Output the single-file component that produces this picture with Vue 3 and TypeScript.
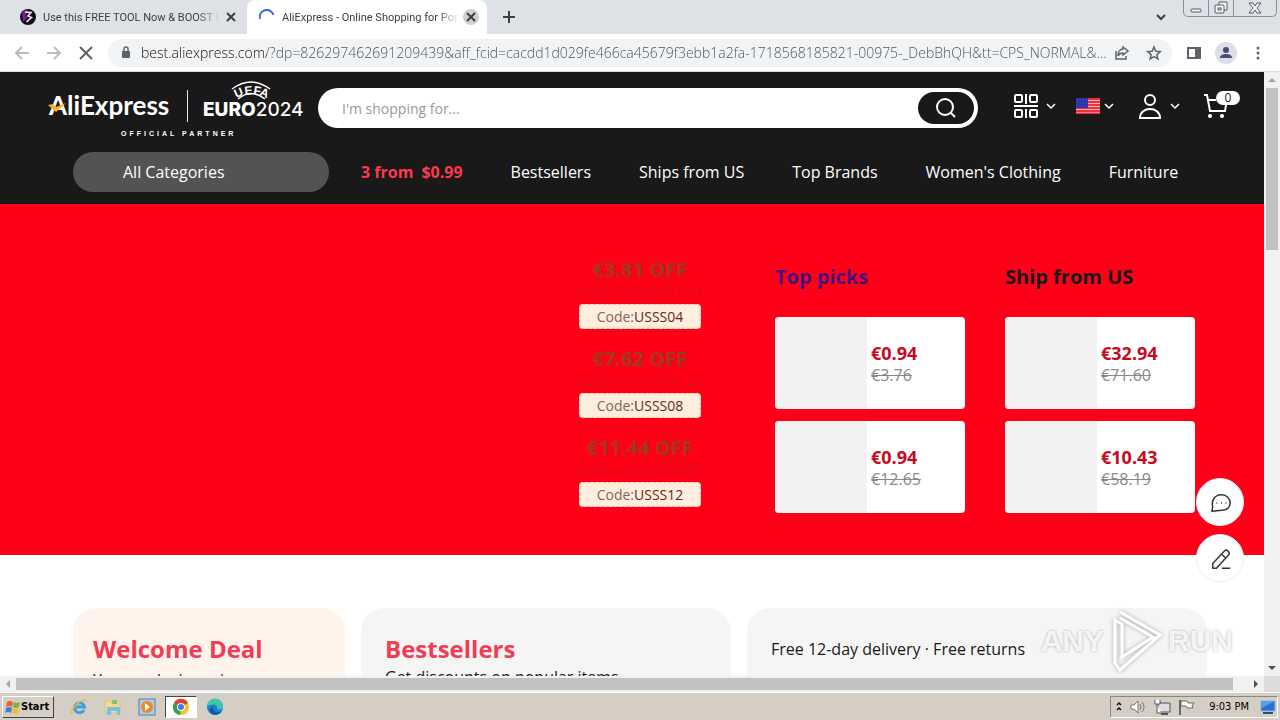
<script setup lang="ts">
import { ref } from 'vue'

interface Coupon { amount: string; terms: string; code: string }
interface Pick { price: string; was: string }
interface PickColumn { title: string; visited: boolean; items: Pick[] }

const address = ref('best.aliexpress.com/?dp=826297462691209439&aff_fcid=cacdd1d029fe466ca45679f3ebb1a2fa-1718568185821-00975-_DebBhQH&tt=CPS_NORMAL&...')
const query = ref('')

const navLinks: string[] = ['Bestsellers', 'Ships from US', 'Top Brands', "Women's Clothing", 'Furniture']

const coupons: Coupon[] = [
  { amount: '€3.81 OFF', terms: 'orders over €27.64', code: 'USSS04' },
  { amount: '€7.62 OFF', terms: 'orders over €56.25', code: 'USSS08' },
  { amount: '€11.44 OFF', terms: 'orders over €84.85', code: 'USSS12' },
]

const columns: PickColumn[] = [
  { title: 'Top picks', visited: true, items: [{ price: '€0.94', was: '€3.76' }, { price: '€0.94', was: '€12.65' }] },
  { title: 'Ship from US', visited: false, items: [{ price: '€32.94', was: '€71.60' }, { price: '€10.43', was: '€58.19' }] },
]
</script>

<template>
  <div class="screen">
    <div class="tabstrip">
      <div class="tab">
        <svg class="favicon" viewBox="0 0 16 16" aria-hidden="true">
          <circle cx="8" cy="8" r="8" fill="#120a18" />
          <path d="M2 4a8 8 0 0 1 6-4L6 5l1 4-4 4z" fill="#7a1c90" />
          <path d="M5 3l6 .5-3 3.500 3.500 1.500-5 4.500" fill="none" stroke="#f3e6f8" stroke-width="1.600" />
        </svg>
        <span class="tab-title">Use this FREE TOOL Now &amp; BOOST E</span>
        <button class="tab-close" aria-label="Close tab">
          <svg viewBox="0 0 16 16"><path d="M4 4l8 8M12 4l-8 8" /></svg>
        </button>
      </div>
      <div class="tab active">
        <svg class="favicon" viewBox="0 0 16 16" aria-hidden="true">
          <path d="M1 10a7 7 0 0 1 13.500-4" fill="none" stroke="#3a6fd0" stroke-width="2" />
        </svg>
        <span class="tab-title">AliExpress - Online Shopping for Pop</span>
        <button class="tab-close" aria-label="Close tab">
          <svg viewBox="0 0 16 16"><path d="M4 4l8 8M12 4l-8 8" /></svg>
        </button>
      </div>
      <button class="new-tab" aria-label="New tab">
        <svg viewBox="0 0 14 14"><path d="M7 1v12M1 7h12" /></svg>
      </button>
      <button class="tab-search" aria-label="Search tabs">
        <svg viewBox="0 0 10 10"><path d="M1 3l4 4 4-4" /></svg>
      </button>
      <div class="window-controls">
        <button aria-label="Minimize"><svg viewBox="0 0 14 14"><rect x="2" y="8" width="10" height="3" rx="1" /></svg></button>
        <button aria-label="Restore"><svg viewBox="0 0 14 14"><path d="M5 4V1h8v8h-3" /><rect x="1" y="4" width="9" height="8" rx="1" /><rect x="4" y="7" width="3" height="2" /></svg></button>
        <button class="wide" aria-label="Close"><svg viewBox="0 0 14 14"><path d="M1 2h4l2 3 2-3h4L9 7l4 5H9L7 9l-2 3H1l4-5z" /></svg></button>
      </div>
    </div>

    <div class="toolbar">
      <button class="tool muted" aria-label="Back"><svg viewBox="0 0 16 16"><path d="M15 8H2M8 2L2 8l6 6" /></svg></button>
      <button class="tool muted" aria-label="Forward"><svg viewBox="0 0 16 16"><path d="M1 8h13M8 2l6 6-6 6" /></svg></button>
      <button class="tool" aria-label="Stop loading"><svg viewBox="0 0 16 16"><path d="M2 2l12 12M14 2L2 14" /></svg></button>
      <div class="omnibox">
        <svg class="lock" viewBox="0 0 10 14" aria-hidden="true"><rect x="1" y="5" width="8" height="7" rx="1" fill="#5f6368" /><path d="M3 6V3a2 2 0 0 1 4 0v3" fill="none" stroke="#5f6368" stroke-width="1.500" /></svg>
        <input v-model="address" class="address" type="text" aria-label="Address" />
        <button class="omni" aria-label="Share"><svg viewBox="0 0 16 16"><path d="M2 6v8h10v-3" /><path d="M9 2l5 4-5 4V8c-3 0-4 1-5 3 0-4 2-7 5-7z" /></svg></button>
        <button class="omni" aria-label="Bookmark"><svg viewBox="0 0 16 16"><path d="M8 2l1.800 4.200 4.500.4-3.400 3 1 4.400L8 11.700 4.100 14l1-4.400-3.400-3 4.500-.4z" /></svg></button>
      </div>
      <button class="tool panel" aria-label="Side panel"><svg viewBox="0 0 16 16"><path d="M2 3h12v10H2z" /><path d="M10 3h4v10h-4z" fill="#5f6368" /></svg></button>
      <button class="tool avatar" aria-label="Profile"><svg viewBox="0 0 22 22"><circle cx="11" cy="11" r="11" fill="#dcdfe8" stroke="none" /><circle cx="11" cy="8" r="3" fill="#46506e" stroke="none" /><path d="M5 16c0-3 3-4 6-4s6 1 6 4z" fill="#46506e" stroke="none" /></svg></button>
      <button class="tool" aria-label="Menu"><svg viewBox="0 0 16 16"><g fill="#5f6368" stroke="none"><circle cx="8" cy="3" r="1.500" /><circle cx="8" cy="8" r="1.500" /><circle cx="8" cy="13" r="1.500" /></g></svg></button>
    </div>

    <div class="viewport">
      <main class="page">
        <header class="site-header">
          <div class="header-top">
            <a class="logo" href="#" aria-label="AliExpress home">
              <svg viewBox="0 0 260 66">
                <text x="1" y="43" class="brand">AliExpress</text>
                <path d="M0 33l5-1 3 3 10-4-10 9z" fill="#fdb022" />
                <path d="M139.500 18v32" stroke="#e8e8e8" />
                <path d="M184 17Q203 3 222 17M190 27Q203 16 217 27" fill="none" stroke="#fff" stroke-width="1.500" />
                <g class="uefa">
                  <text transform="translate(188 26) rotate(-22)">U</text>
                  <text transform="translate(197 23) rotate(-6)">E</text>
                  <text transform="translate(205 22) rotate(10)">F</text>
                  <text transform="translate(211 23) rotate(22)">A</text>
                </g>
                <text x="155" y="44" class="euro">EURO<tspan class="year">2024</tspan></text>
                <text x="73" y="64" class="partner">OFFICIAL PARTNER</text>
              </svg>
            </a>
            <form class="search" @submit.prevent>
              <input v-model="query" type="text" placeholder="I'm shopping for..." aria-label="Search products" />
              <button type="submit" aria-label="Search">
                <svg viewBox="0 0 24 24"><circle cx="11" cy="11" r="8" /><path d="M17 17l4 4" /></svg>
              </button>
            </form>
            <div class="tools">
              <button class="apps" aria-label="Download the app">
                <svg class="big" viewBox="0 0 24 24"><rect x="1" y="1" width="7" height="7" rx="1" /><rect x="16" y="1" width="7" height="7" rx="1" /><rect x="1" y="16" width="7" height="7" rx="1" /><rect x="16" y="16" width="7" height="7" rx="1" /><path d="M12 0v9H11M0 12h24M12 15v9M15 12v-1" /></svg>
                <svg class="chev" viewBox="0 0 10 10"><path d="M1 3l4 4 4-4" /></svg>
              </button>
              <button class="region" aria-label="Ship to United States">
                <svg class="flag" viewBox="0 0 24 16"><path d="M0 0h24v16H0z" fill="#ffb4b8" stroke="none" /><path d="M0 1h24M0 4h24M0 7h24M0 10h24M0 13h24M0 15.500h24" stroke="#f0303c" stroke-width="2" /><path d="M0 0h12v10H0z" fill="#2b35a8" stroke="none" /><path d="M1 2h10M1 5h10M1 8h10" stroke="#5058c0" stroke-width="1" stroke-dasharray="1 2" /></svg>
                <svg class="chev" viewBox="0 0 10 10"><path d="M1 3l4 4 4-4" /></svg>
              </button>
              <button class="account" aria-label="Account">
                <svg class="big" viewBox="0 0 24 26"><circle cx="12" cy="7" r="5" /><path d="M2 25c0-12 20-12 20 0z" /></svg>
                <svg class="chev" viewBox="0 0 10 10"><path d="M1 3l4 4 4-4" /></svg>
              </button>
              <button class="cart" aria-label="Cart">
                <svg class="big" viewBox="0 0 24 24"><path d="M0 1h3l3 16h15l1-6M4 6h8" /><circle cx="6" cy="22" r="1" /><circle cx="18" cy="22" r="1" /></svg>
                <span class="count">0</span>
              </button>
            </div>
          </div>
          <nav class="nav">
            <button class="categories">All Categories</button>
            <div class="links">
              <a class="deal" href="#"><span>3 from</span><span>$0.99</span></a>
              <a v-for="link in navLinks" :key="link" href="#">{{ link }}</a>
            </div>
          </nav>
        </header>

        <section class="hero">
          <div class="coupons">
            <div v-for="c in coupons" :key="c.code" class="coupon">
              <strong>{{ c.amount }}</strong>
              <small>{{ c.terms }}</small>
              <div class="code">Code:<b>{{ c.code }}</b></div>
            </div>
          </div>
          <div v-for="col in columns" :key="col.title" class="picks">
            <h2 :class="{ visited: col.visited }">{{ col.title }}</h2>
            <a v-for="item in col.items" :key="item.was" class="pick" href="#">
              <span class="thumb"></span>
              <span class="prices"><strong>{{ item.price }}</strong><del>{{ item.was }}</del></span>
            </a>
          </div>
        </section>

        <section class="floors">
          <article class="floor warm"><h3>Welcome Deal</h3><p>Your exclusive price</p></article>
          <article class="floor best"><h3>Bestsellers</h3><p>Get discounts on popular items</p></article>
          <article class="floor choice"><p>Free 12-day delivery · Free returns</p></article>
        </section>
      </main>

      <div class="floaters">
        <button aria-label="Chat"><svg viewBox="0 0 24 24"><path d="M2 21l1-5C1 9 6 3 12 3h1c5 0 9 4 9 9s-4 8-9 8z" /><path d="M7 12h1M12 12h1M17 12h1" /></svg></button>
        <button aria-label="Feedback"><svg viewBox="0 0 24 24"><path d="M3 22v-5L16 3c2-2 7 2 4 5L7 22zM13 7l4 4M13 22h9" /></svg></button>
      </div>

      <div class="vbar"><i class="arrow up"></i><i class="thumb-v"></i><i class="arrow down"></i></div>
      <div class="hbar"><i class="arrow left"></i><i class="thumb-h"></i><i class="arrow right"></i></div>
      <div class="corner"></div>
    </div>

    <footer class="taskbar">
      <button class="start">
        <svg viewBox="0 0 16 16" aria-hidden="true"><path d="M2 3q3-2 6 0L7 8Q4 6 1 8z" fill="#e8642c" /><path d="M9 3q3 2 6 0l-1 5q-3 2-6 0z" fill="#72b63a" /><path d="M1 9q3-2 6 0l-1 5q-3-2-6 0z" fill="#3e80d8" /><path d="M8 9q3 2 6 0l-1 5q-3 2-6 0z" fill="#f4bd28" /></svg>
        Start
      </button>
      <div class="launch">
        <button aria-label="Internet Explorer"><svg viewBox="0 0 18 18"><path d="M14 12a5 5 0 1 1 .5-3H5" fill="none" stroke="#3f9fdc" stroke-width="3" /><path d="M2 16C-1 12 12-1 17 3" fill="none" stroke="#e8bd3c" stroke-width="1.500" /></svg></button>
        <button aria-label="File Explorer"><svg viewBox="0 0 18 18"><path d="M1 3h6l1 2h8v10H1z" fill="#f0dc86" stroke="#cdb45a" stroke-width=".5" /><path d="M8 2h5v4H8z" fill="#86c06a" /><path d="M3 9h13v8h-3v-4H7v4H3z" fill="#7dbce6" /></svg></button>
        <button aria-label="Media Player"><svg viewBox="0 0 18 18"><rect x="1" y="1" width="16" height="16" fill="#a9cdec" stroke="#5580b4" /><circle cx="9" cy="9" r="6" fill="#f08a1c" /><path d="M7 5l5 4-5 4z" fill="#fff" /></svg></button>
        <button class="running" aria-label="Google Chrome"><svg viewBox="0 0 18 18"><circle cx="9" cy="9" r="8" fill="#f6c22c" /><path d="M9 9L2 5a8 8 0 0 1 14 0z" fill="#e0402f" /><path d="M9 9L2 5a8 8 0 0 0 6 12z" fill="#2da352" /><circle cx="9" cy="9" r="4" fill="#fff" /><circle cx="9" cy="9" r="3" fill="#3b7de8" /></svg></button>
        <button aria-label="Microsoft Edge"><svg viewBox="0 0 18 18"><circle cx="9" cy="9" r="8" fill="#1a7fd0" /><path d="M1 9a8 8 0 0 1 16-1c0 3-3 4-6 3 2-4-5-7-10-2z" fill="#3cc6b0" /><path d="M7 9c-1 5 4 7 9 4-4 6-13 4-12-2q1-2 3-2z" fill="#1356a0" /></svg></button>
      </div>
      <div class="tray">
        <svg class="expand" viewBox="0 0 8 12" aria-hidden="true"><path d="M2 4l2-2 2 2M2 9l2-2 2 2" fill="none" stroke="#111" stroke-width="1.500" /></svg>
        <svg viewBox="0 0 18 18" aria-hidden="true"><path d="M2 7h3l4-4v12l-4-4H2z" fill="#fff" stroke="#777" /><path d="M11 6q2 3 0 6M13 4q4 5 0 10" fill="none" stroke="#777" /></svg>
        <svg viewBox="0 0 18 18" aria-hidden="true"><path d="M5 5h12v9H5z" fill="#ddd" stroke="#555" /><path d="M8 16h7" stroke="#555" stroke-width="2" /><path d="M2 2v4h5V2M4 6v9h4" fill="#fff" stroke="#555" /></svg>
        <svg viewBox="0 0 18 18" aria-hidden="true"><path d="M3 2v15" stroke="#666" stroke-width="2" /><path d="M4 3h6l1 2h6l-2 3 1 2h-6L9 8H4z" fill="#fff" stroke="#666" /></svg>
        <time>9:03 PM</time>
        <svg class="desk" viewBox="0 0 18 16" aria-hidden="true"><path d="M2 2h14v10H2z" fill="#2a6ed0" stroke="#8eb4e6" /><path d="M2 2h14L3 9z" fill="#5b9cf0" /><path d="M4 14h10" stroke="#2b4c80" stroke-width="2" /></svg>
      </div>
    </footer>

    <div class="watermark" aria-hidden="true">
      <span>ANY</span>
      <svg viewBox="0 0 56 66"><path d="M12 4L52 27 12 62 7 55V12l7 4v33L45 29 12 10" /></svg>
      <span>RUN</span>
    </div>
  </div>
</template>

<style>
body { overflow: hidden; }
</style>

<style scoped>
* { box-sizing: border-box; }
button { border: 0; padding: 0; margin: 0; background: none; font: inherit; color: inherit; display: flex; align-items: center; justify-content: center; cursor: pointer; }
a { color: inherit; text-decoration: none; }
svg { display: block; flex: none; }
h2, h3, p { margin: 0; }

.screen { position: relative; display: flex; flex-direction: column; height: 100vh; font-family: "Open Sans", "Noto Sans", sans-serif; font-size: 16px; color: #191919; background: #fff; overflow: hidden; }

.tabstrip { display: flex; height: 34px; background: #dee1e6; font-family: Roboto, sans-serif; font-size: 11px; color: #3c4043; flex: none; }
.tab { display: flex; align-items: center; width: 240px; padding: 0 1px 0 20px; }
.tab.active { background: #fff; border-radius: 8px 8px 0 0; padding: 0 8px 0 12px; margin-left: 7px; }
.favicon { width: 16px; height: 16px; margin-right: 7px; }
.tab-title { flex: 1; min-width: 0; white-space: nowrap; overflow: hidden; mask-image: linear-gradient(to right, #000 88%, transparent); }
.tab-close { width: 16px; height: 16px; margin-left: 4px; border-radius: 50%; }
.active .tab-close { background: #d0d0d0; }
.tab-close svg { width: 16px; fill: none; stroke: #3c4043; stroke-width: 2; }
.new-tab { width: 44px; }
.new-tab svg { width: 14px; fill: none; stroke: #3c4043; stroke-width: 2; }
.tab-search { margin-left: auto; width: 32px; margin-right: 6px; }
.tab-search svg { width: 10px; fill: none; stroke: #3c4043; stroke-width: 2; }
.window-controls { display: flex; height: 17px; margin-right: 3px; border: 1px solid #8b8f98; border-top: 0; border-radius: 0 0 5px 5px; }
.window-controls button { width: 25px; border-right: 1px solid #8b8f98; }
.window-controls .wide { width: 42px; border: 0; }
.window-controls svg { width: 14px; fill: #f5f5f5; stroke: #555a66; stroke-width: 1; }

.toolbar { display: flex; align-items: center; height: 38px; padding: 0 6px; border-bottom: 1px solid #d8dade; flex: none; }
.tool { width: 32px; height: 32px; }
.tool svg { width: 16px; fill: none; stroke: #5f6368; stroke-width: 2; }
.tool.muted svg { stroke: #bdbdbd; }
.tool.avatar svg { width: 22px; }
.tool.panel { margin-left: 6px; }
.omnibox { display: flex; align-items: center; flex: 1; min-width: 0; height: 28px; margin-left: 6px; padding: 0 2px 0 13px; border-radius: 14px; background: #f1f3f4; }
.lock { width: 10px; margin-right: 10px; }
.address { flex: 1; min-width: 0; border: 0; padding: 0; outline: 0; font: 300 14px "Open Sans", "Noto Sans", sans-serif; color: transparent; background: linear-gradient(to right, #101114 126px, #4b5055 126px); background-clip: text; }
.omni { width: 32px; height: 28px; }
.omni svg { width: 16px; fill: none; stroke: #5f6368; stroke-width: 1.5; }

.viewport { position: relative; flex: 1; min-height: 0; display: grid; grid-template-columns: minmax(0, 1fr) 16px; grid-template-rows: minmax(0, 1fr) 16px; }
.page { overflow: hidden; background: #fff; }

.site-header { background: #191919; color: #fff; padding-bottom: 12px; }
.header-top { display: flex; align-items: center; height: 80px; padding: 0 24px 0 48px; }
.logo { align-self: flex-start; margin-right: 10px; }
.logo svg { width: 260px; height: 66px; fill: #fff; }
.brand { font: 700 26px Lato, sans-serif; }
.euro { font: 800 19px Inter, sans-serif; }
.year { font-weight: 500; }
.uefa { font: 700 12px "Liberation Sans", Arial, sans-serif; }
.partner { font: 700 7px "Liberation Sans", Arial, sans-serif; letter-spacing: 3px; }
.search { display: flex; align-items: center; flex: 1; height: 40px; margin-bottom: 8px; padding: 4px; border-radius: 20px; background: #fff; }
.search input { flex: 1; min-width: 0; border: 0; outline: 0; padding: 0 20px; background: none; font: 14px "Open Sans", "Noto Sans", sans-serif; }
.search input::placeholder { color: #999; }
.search button { width: 56px; height: 32px; border-radius: 16px; background: #191919; }
.search svg { width: 24px; fill: none; stroke: #fff; stroke-width: 2; }
.tools { display: flex; align-items: center; gap: 24px; margin: 0 0 12px 36px; }
.tools svg { fill: none; stroke: #fff; stroke-width: 2; }
.tools .big { width: 24px; height: 26px; }
.tools button { gap: 8px; }
.tools .chev { width: 10px; stroke-width: 1.5; }
.tools .flag { width: 24px; height: 16px; }
.tools .region { gap: 4px; margin-left: -4px; }
.tools .cart { position: relative; width: 36px; justify-content: flex-start; }
.count { position: absolute; right: 0; top: -2px; width: 24px; border-radius: 7px; background: #fff; color: #191919; font-size: 12px; line-height: 14px; }
.nav { display: flex; align-items: center; gap: 32px; padding-left: 73px; }
.categories { width: 256px; height: 40px; padding-left: 50px; justify-content: flex-start; border-radius: 20px; background: #535353; }
.links { display: flex; gap: 48px; white-space: nowrap; }
.deal { display: flex; gap: 8px; font-weight: 700; color: #fd384f; }

.hero { display: flex; background: #ff0019; height: 351px; padding: 52px 69px 0; justify-content: flex-end; gap: 40px; }
.coupons { width: 130px; margin-right: 30px; display: flex; flex-direction: column; gap: 12px; }
.coupon { display: flex; flex-direction: column; align-items: center; height: 77px; white-space: nowrap; }
.coupon strong { font-size: 20px; line-height: 28px; color: #a03a1e; }
.coupon small { font-size: 14px; line-height: 16px; margin-bottom: 4px; color: #e00e17; }
.code { width: 122px; height: 25px; border: 1px dashed #ffb8a0; border-radius: 4px; background: #ffeedd; color: #82665a; font-size: 14px; line-height: 23px; text-align: center; }
.code b { font-weight: 400; color: #5c2c1c; }
.picks { width: 190px; display: flex; flex-direction: column; gap: 12px; }
.picks h2 { font-size: 20px; line-height: 28px; margin: 7px 0 14px; color: #191919; }
.picks h2.visited { color: #4b0f7c; }
.pick { display: flex; height: 92px; border-radius: 4px; overflow: hidden; background: #fff; }
.pick .thumb { width: 92px; background: #f2f2f2; }
.prices { display: flex; flex-direction: column; justify-content: center; padding: 2px 0 0 4px; line-height: 22px; }
.prices strong { color: #c60a22; font-size: 18px; }
.prices del { color: #888; }

.floors { display: grid; grid-template-columns: 272fr 370fr 460fr; gap: 16px; padding: 53px 57px 0 73px; }
.floor { height: 240px; padding: 24px 20px; border-radius: 24px; background: #f5f5f5; }
.floor.warm { background: #fff4ec; }
.floor.best, .floor.choice { padding-left: 24px; }
.floor h3 { font-size: 24px; line-height: 34px; color: #f23c56; }
.floor p { line-height: 22px; }
.floor.warm p { line-height: 28px; }
.floor.choice p { line-height: 34px; }

.floaters { position: absolute; right: 36px; top: 406px; display: flex; flex-direction: column; gap: 8px; }
.floaters button { width: 48px; height: 48px; border-radius: 50%; background: #fff; border: 1px solid #eee; padding: 2px 0 0 2px; }
.floaters svg { width: 22px; fill: none; stroke: #333; stroke-width: 1.6; stroke-linejoin: round; }

.vbar { display: flex; flex-direction: column; align-items: center; background: #f1f1f1; }
.hbar { display: flex; align-items: center; background: #f1f1f1; }
.corner { background: #dcdcdc; }
.thumb-v { width: 12px; height: 162px; background: #c1c1c1; margin-bottom: auto; }
.thumb-h { height: 12px; flex: 1; margin-right: 15px; background: #c1c1c1; }
.arrow { width: 16px; height: 16px; flex: none; display: flex; align-items: center; justify-content: center; }
.arrow::before { content: ""; border: 4px solid transparent; }
.up::before { border-top: 0; border-bottom-color: #a3a3a3; }
.down::before { border-bottom: 0; border-top-color: #505050; }
.left::before { border-left: 0; border-right-color: #a3a3a3; }
.right::before { border-right: 0; border-left-color: #505050; }

.taskbar { display: flex; align-items: center; height: 28px; padding: 0 2px; border-top: 1px solid #fff; background: #d5cec5; font: 11px "DejaVu Sans Condensed", "DejaVu Sans", sans-serif; color: #000; flex: none; }
.start { height: 22px; padding: 0 4px 0 2px; font-weight: 700; border: 1px solid; border-color: #fff #444 #444 #fff; }
.start svg { width: 16px; }
.launch { display: flex; gap: 2px; margin-left: 9px; }
.launch button { width: 32px; height: 22px; }
.launch .running { border: 1px solid; border-color: #444 #fff #fff #444; background: #fff; }
.launch svg { width: 18px; }
.tray { display: flex; align-items: center; gap: 6px; height: 22px; margin-left: auto; padding: 0 0 0 4px; border: 1px solid; border-color: #888 #fff #fff #888; }
.tray svg { width: 18px; }
.tray .expand { width: 8px; }
.tray time { margin: 0 4px 0 8px; }

.watermark { position: absolute; right: 47px; bottom: 46px; display: flex; align-items: center; font: 700 30px "Liberation Sans", Arial, sans-serif; color: rgba(255, 255, 255, 0.85); text-shadow: 0 0 3px rgba(0, 0, 0, 0.3); pointer-events: none; }
.watermark svg { width: 56px; height: 66px; margin: 0 4px; fill: none; stroke: #fff; stroke-width: 3; filter: drop-shadow(0 0 2px rgba(0, 0, 0, 0.3)); }
</style>
